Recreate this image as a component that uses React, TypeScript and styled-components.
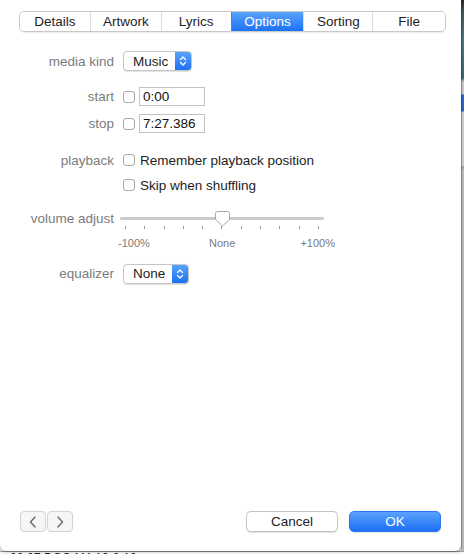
import React from "react";
import styled, { createGlobalStyle } from "styled-components";

const Global = createGlobalStyle`
  html, body { margin: 0; padding: 0; }
  body {
    width: 464px; height: 554px; overflow: hidden;
    background: #e9e9e9;
    font-family: "Liberation Sans", Arial, sans-serif;
    -webkit-font-smoothing: antialiased;
  }
`;

const Desktop = styled.div`
  display: grid;
  grid-template-columns: 461px 3px;
  grid-template-rows: 551px 3px;
  width: 464px;
  height: 554px;
`;

const RightStrip = styled.div`
  background: linear-gradient(
    to bottom,
    #2b2620 0px, #3c5a60 10px, #4d7b80 40px, #3a6a72 78px,
    #c9c9c9 82px, #c9c9c9 94px, #1f6fd6 95px, #1f6fd6 111px,
    #cfcfcf 112px, #cfcfcf 166px, #9a9a9a 167px, #9a9a9a 168px, #bdbdbd 169px
  );
`;

const BottomStrip = styled.div`
  grid-column: 1 / 3;
  background: #f2f2f2;
  border-top: 1px solid #9c9c9c;
  overflow: hidden;
  font-size: 12px;
  line-height: 1;
  color: #222;
  padding-left: 10px;
  white-space: nowrap;
`;

const Window = styled.div`
  background: #ffffff;
  border-radius: 0 0 6px 6px;
  box-shadow: 0 0 0 1px rgba(0,0,0,0.12), 1px 1px 2px rgba(0,0,0,0.25);
  display: flex;
  flex-direction: column;
  font-size: 13.5px;
  color: #1d1d1d;
  position: relative;
  z-index: 1;
`;

const TabBar = styled.div`
  display: flex;
  margin: 11px 0 0 19px;
  width: 427px;
  height: 21px;
  box-sizing: border-box;
  border: 1px solid #c9c9c9;
  border-radius: 5px;
  overflow: hidden;
  box-shadow: 0 0.5px 1px rgba(0,0,0,0.08);
`;

const Tab = styled.div<{ $active?: boolean; $w: number }>`
  width: ${(p) => p.$w}px;
  display: flex;
  align-items: center;
  justify-content: center;
  font-size: 13.5px;
  color: ${(p) => (p.$active ? "#ffffff" : "#1d1d1d")};
  background: ${(p) =>
    p.$active ? "linear-gradient(to bottom, #59a3fb, #1c72f6)" : "#ffffff"};
  border-left: 1px solid ${(p) => (p.$active ? "#3b86f7" : "#dcdcdc")};
  &:first-child { border-left: none; }
`;

const Form = styled.div`
  display: flex;
  flex-direction: column;
`;

const Row = styled.div<{ $top: number; $h: number }>`
  display: flex;
  align-items: center;
  margin-top: ${(p) => p.$top}px;
  height: ${(p) => p.$h}px;
`;

const Label = styled.div`
  width: 122px;
  text-align: right;
  padding-right: 8px;
  box-sizing: border-box;
  color: #7b7b7b;
  font-size: 13.5px;
  flex-shrink: 0;
`;

const Popup = styled.div<{ $w: number }>`
  display: flex;
  width: ${(p) => p.$w}px;
  height: 20px;
  box-sizing: border-box;
  border: 1px solid #c6c6c6;
  border-radius: 4px;
  overflow: hidden;
  box-shadow: 0 0.5px 1px rgba(0,0,0,0.12);
  margin-left: 1px;
`;

const PopupText = styled.div`
  flex: 1;
  display: flex;
  align-items: center;
  padding-left: 9px;
  font-size: 13.5px;
  color: #1d1d1d;
`;

const PopupArrow = styled.div`
  width: 16px;
  background: linear-gradient(to bottom, #5aa3fb, #1c70f5);
  display: flex;
  align-items: center;
  justify-content: center;
`;

const Check = styled.div`
  width: 12px;
  height: 12px;
  box-sizing: border-box;
  border: 1px solid #a9a9a9;
  border-radius: 3px;
  background: #fff;
  margin-left: 1px;
  flex-shrink: 0;
`;

const TextField = styled.div`
  margin-left: 4px;
  width: 66px;
  height: 19px;
  box-sizing: border-box;
  border: 1px solid #c3c3c3;
  display: flex;
  align-items: center;
  padding-left: 3px;
  font-size: 13.5px;
  color: #111;
`;

const CheckText = styled.div`
  margin-left: 5px;
  font-size: 13.5px;
  color: #1d1d1d;
`;

const SliderBox = styled.div`
  position: relative;
  margin-left: -2px;
  width: 204px;
  height: 18px;
`;

const Track = styled.div`
  position: absolute;
  left: 0;
  right: 0;
  top: 8px;
  height: 3px;
  border-radius: 2px;
  background: #cacaca;
`;

const Ticks = styled.div`
  position: absolute;
  left: 5px;
  width: 194px;
  top: 17px;
  height: 4px;
  display: flex;
  justify-content: space-between;
`;

const Tick = styled.div`
  width: 1px;
  height: 3px;
  background: #9a9a9a;
`;

const Thumb = styled.svg`
  position: absolute;
  left: 95px;
  top: 2px;
`;

const ScaleRow = styled.div`
  margin-top: 10px;
  margin-left: 118px;
  width: 217px;
  display: flex;
  justify-content: space-between;
  font-size: 11px;
  color: #7b7b7b;
  height: 12px;
  align-items: center;
`;

const ScaleLabel = styled.span<{ $shift?: number }>`
  position: relative;
  left: ${(p) => p.$shift ?? 0}px;
`;

const Spacer = styled.div`
  flex: 1;
`;

const Footer = styled.div`
  display: flex;
  align-items: center;
  padding: 0 20px 19px 20px;
  height: 21px;
`;

const NavGroup = styled.div`
  display: flex;
  gap: 1px;
  height: 21px;
`;

const NavButton = styled.div`
  width: 26px;
  height: 21px;
  box-sizing: border-box;
  border: 1px solid #d3d3d3;
  border-radius: 4px;
  background: #f6f6f6;
  display: flex;
  align-items: center;
  justify-content: center;
`;

const PushButton = styled.div<{ $primary?: boolean }>`
  width: 92px;
  height: 21px;
  box-sizing: border-box;
  border-radius: 5px;
  display: flex;
  align-items: center;
  justify-content: center;
  font-size: 13.5px;
  color: ${(p) => (p.$primary ? "#ffffff" : "#1d1d1d")};
  background: ${(p) =>
    p.$primary ? "linear-gradient(to bottom, #5aa2fb, #1b6ff5)" : "#ffffff"};
  border: 1px solid ${(p) => (p.$primary ? "#2a78f2" : "#c4c4c4")};
  box-shadow: 0 0.5px 1px rgba(0,0,0,0.12);
`;

const Buttons = styled.div`
  margin-left: auto;
  display: flex;
  gap: 11px;
`;

const Chevrons = () => (
  <svg width="8" height="12" viewBox="0 0 8 12">
    <path d="M1.5 4.5 L4 2 L6.5 4.5" fill="none" stroke="#fff" strokeWidth="1.3" strokeLinecap="round" strokeLinejoin="round" />
    <path d="M1.5 7.5 L4 10 L6.5 7.5" fill="none" stroke="#fff" strokeWidth="1.3" strokeLinecap="round" strokeLinejoin="round" />
  </svg>
);

const PopupButton = ({ value, w }: { value: string; w: number }) => (
  <Popup $w={w}>
    <PopupText>{value}</PopupText>
    <PopupArrow>
      <Chevrons />
    </PopupArrow>
  </Popup>
);

const tabs: [string, number][] = [
  ["Details", 71],
  ["Artwork", 71],
  ["Lyrics", 70],
  ["Options", 73],
  ["Sorting", 69],
  ["File", 73],
];

export default function App() {
  return (
    <>
      <Global />
      <Desktop>
        <Window>
          <TabBar>
            {tabs.map(([t, w]) => (
              <Tab key={t} $w={w} $active={t === "Options"}>
                {t}
              </Tab>
            ))}
          </TabBar>
          <Form>
            <Row $top={19} $h={20}>
              <Label>media kind</Label>
              <PopupButton value="Music" w={69} />
            </Row>
            <Row $top={16} $h={19}>
              <Label>start</Label>
              <Check />
              <TextField>0:00</TextField>
            </Row>
            <Row $top={8} $h={19}>
              <Label>stop</Label>
              <Check />
              <TextField>7:27.386</TextField>
            </Row>
            <Row $top={18} $h={18}>
              <Label>playback</Label>
              <Check />
              <CheckText>Remember playback position</CheckText>
            </Row>
            <Row $top={7} $h={18}>
              <Label></Label>
              <Check />
              <CheckText>Skip when shuffling</CheckText>
            </Row>
            <Row $top={15} $h={18}>
              <Label>volume adjust</Label>
              <SliderBox>
                <Track />
                <Ticks>
                  {Array.from({ length: 11 }).map((_, i) => (
                    <Tick key={i} />
                  ))}
                </Ticks>
                <Thumb width="15" height="16" viewBox="0 0 15 16">
                  <path
                    d="M2.5 0.5 H12.5 A2 2 0 0 1 14.5 2.5 V8.5 L7.5 15 L0.5 8.5 V2.5 A2 2 0 0 1 2.5 0.5 Z"
                    fill="#ffffff"
                    stroke="#a8a8a8"
                    strokeWidth="1"
                  />
                </Thumb>
              </SliderBox>
            </Row>
            <ScaleRow>
              <ScaleLabel>-100%</ScaleLabel>
              <ScaleLabel $shift={-3}>None</ScaleLabel>
              <ScaleLabel>+100%</ScaleLabel>
            </ScaleRow>
            <Row $top={14} $h={21}>
              <Label>equalizer</Label>
              <PopupButton value="None" w={66} />
            </Row>
          </Form>
          <Spacer />
          <Footer>
            <NavGroup>
              <NavButton>
                <svg width="8" height="12" viewBox="0 0 8 12">
                  <path d="M6 1 L1.5 6 L6 11" fill="none" stroke="#6a6a6a" strokeWidth="1.4" strokeLinecap="round" strokeLinejoin="round" />
                </svg>
              </NavButton>
              <NavButton>
                <svg width="8" height="12" viewBox="0 0 8 12">
                  <path d="M2 1 L6.5 6 L2 11" fill="none" stroke="#6a6a6a" strokeWidth="1.4" strokeLinecap="round" strokeLinejoin="round" />
                </svg>
              </NavButton>
            </NavGroup>
            <Buttons>
              <PushButton>Cancel</PushButton>
              <PushButton $primary>OK</PushButton>
            </Buttons>
          </Footer>
        </Window>
        <RightStrip />
        <BottomStrip>02-07 DOC-MA 10-2-10</BottomStrip>
      </Desktop>
    </>
  );
}
